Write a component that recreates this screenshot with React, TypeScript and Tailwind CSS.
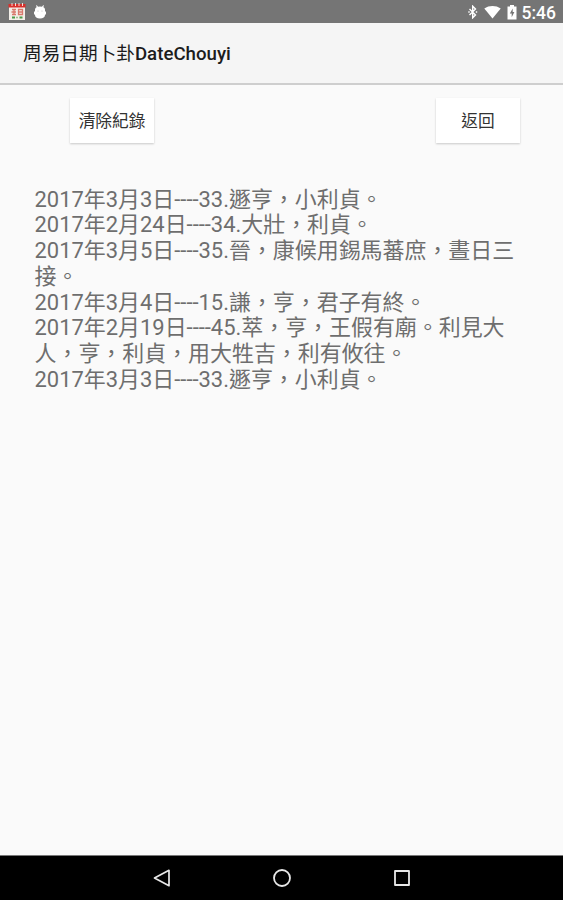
import React from "react";

const records: string[] = [
  "2017年3月3日----33.遯亨，小利貞。",
  "2017年2月24日----34.大壯，利貞。",
  "2017年3月5日----35.晉，康候用錫馬蕃庶，晝日三",
  "接。",
  "2017年3月4日----15.謙，亨，君子有終。",
  "2017年2月19日----45.萃，亨，王假有廟。利見大",
  "人，亨，利貞，用大牲吉，利有攸往。",
  "2017年3月3日----33.遯亨，小利貞。",
];

const StatusBar = () => {
  return (
    <div className="flex h-[23px] shrink-0 items-center justify-between bg-[#757575] pt-px pr-[7px] pl-[8px]">
      <div className="flex items-center gap-[7px]">
        {/* Calendar app icon */}
        <svg width="18" height="18" viewBox="0 0 18 18">
          <rect x="1" y="1" width="16" height="16" fill="#f3efe9" />
          <rect x="0.500" y="1" width="17" height="3.500" fill="#d8302c" />
          <path d="M4 0v3M7.500 0v3M11 0v3M14.500 0v3" stroke="#f5dcd6" strokeWidth="1" />
          <path d="M4 6.500h4M3.500 9h4.500M4 11.500h4M6 6v6M10.500 6.500h4v5h-4zM10.500 9h4" stroke="#d9796c" strokeWidth="1.3" fill="none" />
          <path d="M4 14.500h3M11.500 14.500h3" stroke="#4c9a4a" strokeWidth="2" />
          <path d="M8 14.500h2" stroke="#9dbf8c" strokeWidth="1.4" />
        </svg>
        {/* Android head */}
        <svg width="14" height="16" viewBox="0 0 14 16">
          <path d="M3.400 1.500l1.400 2M10.600 1.500L9.200 3.500" stroke="#fff" strokeWidth="1.2" />
          <path d="M1 7.500h1V5.500C2 3.500 4 2.500 7 2.500s5 1 5 3v2h1v3h-1v.5c0 2.200-1.800 3.500-5 3.500S2 13.200 2 11v-.5H1z" fill="#fff" />
          <circle cx="5" cy="7" r=".6" fill="#bbb" />
          <circle cx="9" cy="7" r=".6" fill="#bbb" />
        </svg>
      </div>
      <div className="flex items-center text-white">
        <svg width="10" height="14" viewBox="0 0 10 14" fill="none" stroke="#fff" strokeWidth="1.4">
          <path d="M1.500 4l6 6L4.700 12.800V1.200L7.500 4l-6 6" />
          <path d="M.3 7h1.400M7.800 7h1.400" />
        </svg>
        <svg className="ml-[6px]" width="17" height="14" viewBox="0 0 17 14">
          <path d="M.3 3.500C5 .2 12 .2 16.700 3.500L8.500 13.500z" fill="#fff" />
        </svg>
        <svg className="ml-[6px]" width="10" height="15" viewBox="0 0 10 15">
          <path d="M3 0h4v1.500h2.500v13h-9v-13H3z" fill="#fff" />
          <path d="M5.700 3.500L2.800 8.600h1.900v3.600l2.700-5.100H5.700z" fill="#757575" />
        </svg>
        <span className="ml-[5px] pt-px text-[17.5px] leading-[22px] font-medium">5:46</span>
      </div>
    </div>
  );
};

const NavBar = () => {
  return (
    <div className="flex h-[45px] shrink-0 items-center justify-center gap-[100px] border-t border-[#777] bg-black">
      <svg width="20" height="20" viewBox="0 0 20 20" fill="none" stroke="#e8e8e8" strokeWidth="1.7" strokeLinejoin="round">
        <path d="M17 2.300v15.400L2.500 10z" />
      </svg>
      <svg width="20" height="20" viewBox="0 0 20 20" fill="none" stroke="#e8e8e8" strokeWidth="1.8">
        <circle cx="10" cy="10" r="8" />
      </svg>
      <svg width="20" height="20" viewBox="0 0 20 20" fill="none" stroke="#e8e8e8" strokeWidth="1.8" strokeLinejoin="round">
        <rect x="3" y="3" width="14" height="14" />
      </svg>
    </div>
  );
};

export default function App() {
  return (
    <div
      lang="zh-TW"
      className="flex h-[900px] w-[563px] flex-col overflow-hidden bg-[#fafafa] font-['Roboto','Noto_Sans_CJK_TC',sans-serif]"
    >
      <StatusBar />

      {/* Title bar */}
      <header className="flex h-[62px] shrink-0 items-center border-b-2 border-[#cecece] bg-[#f5f5f5] pt-[2px] pl-[23px]">
        <h1 className="text-[18.67px] leading-[26px] text-[#1c1c1c]">
          周易日期卜卦<span className="font-medium">DateChouyi</span>
        </h1>
      </header>

      <main className="flex-1">
        <div className="flex justify-between pt-[13px] pr-[43px] pl-[70px]">
          <button className="h-[45px] w-[84px] bg-white pt-[2px] text-[16.7px] text-[#333] shadow-[0_1px_2px_rgba(0,0,0,0.2)]">
            清除紀錄
          </button>
          <button className="h-[45px] w-[84px] bg-white pt-[2px] text-[16.7px] text-[#333] shadow-[0_1px_2px_rgba(0,0,0,0.2)]">
            返回
          </button>
        </div>

        {/* Saved records */}
        <div className="mt-[43.7px] ml-[34.5px] text-[21.94px] leading-[25.75px] whitespace-nowrap text-[#6e6e6e]">
          {records.map((line, index) => (
            <p key={index}>{line}</p>
          ))}
        </div>
      </main>

      <NavBar />
    </div>
  );
}
